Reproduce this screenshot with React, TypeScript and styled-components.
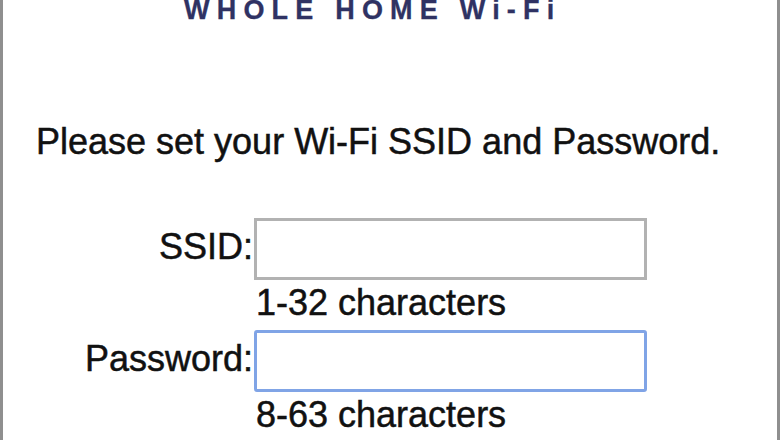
import React from "react";
import styled, { createGlobalStyle } from "styled-components";

const GlobalStyle = createGlobalStyle`
  html, body {
    margin: 0;
    padding: 0;
    background: #ffffff;
  }
`;

const Frame = styled.div`
  box-sizing: border-box;
  width: 780px;
  height: 440px;
  overflow: hidden;
  background: #ffffff;
  border-left: 3px solid #8f8f8f;
  border-right: 3px solid #8f8f8f;
  font-family: "Liberation Sans", Arial, sans-serif;
  color: #111111;
  -webkit-text-stroke: 0.5px currentColor;
  display: flex;
  flex-direction: column;
`;

const Brand = styled.div`
  padding-left: 181px;
  font-size: 27px;
  line-height: 21px;
  font-weight: bold;
  letter-spacing: 7.2px;
  color: #2f3263;
  -webkit-text-stroke: 0.3px currentColor;
  white-space: nowrap;
`;

const Instruction = styled.p`
  margin: 101px 0 0 33px;
  font-size: 36px;
  line-height: 40px;
  white-space: nowrap;
`;

const Form = styled.div`
  margin-top: 56px;
  display: grid;
  grid-template-columns: 250px 393px;
  column-gap: 1px;
`;

const Label = styled.label`
  font-size: 36px;
  line-height: 58px;
  text-align: right;
  white-space: nowrap;
`;

const Field = styled.input<{ $focused?: boolean }>`
  box-sizing: border-box;
  width: 393px;
  height: 62px;
  margin: 0;
  padding: 0 6px;
  background: #ffffff;
  border: 3px solid ${({ $focused }) => ($focused ? "#80a4e6" : "#b2b2b2")};
  border-radius: ${({ $focused }) => ($focused ? "3px" : "0")};
  outline: none;
  font-family: inherit;
  font-size: 30px;
`;

const Hint = styled.div`
  grid-column: 2;
  padding: 2px 0 6px 2px;
  font-size: 36px;
  line-height: 42px;
  white-space: nowrap;
`;

export default function App() {
  return (
    <>
      <GlobalStyle />
      <Frame>
        <Brand>WHOLE HOME Wi-Fi</Brand>
        <Instruction>Please set your Wi-Fi SSID and Password.</Instruction>
        <Form>
          <Label htmlFor="ssid">SSID:</Label>
          <Field id="ssid" type="text" />
          <Hint>1-32 characters</Hint>
          <Label htmlFor="password">Password:</Label>
          <Field id="password" type="password" $focused />
          <Hint>8-63 characters</Hint>
        </Form>
      </Frame>
    </>
  );
}
